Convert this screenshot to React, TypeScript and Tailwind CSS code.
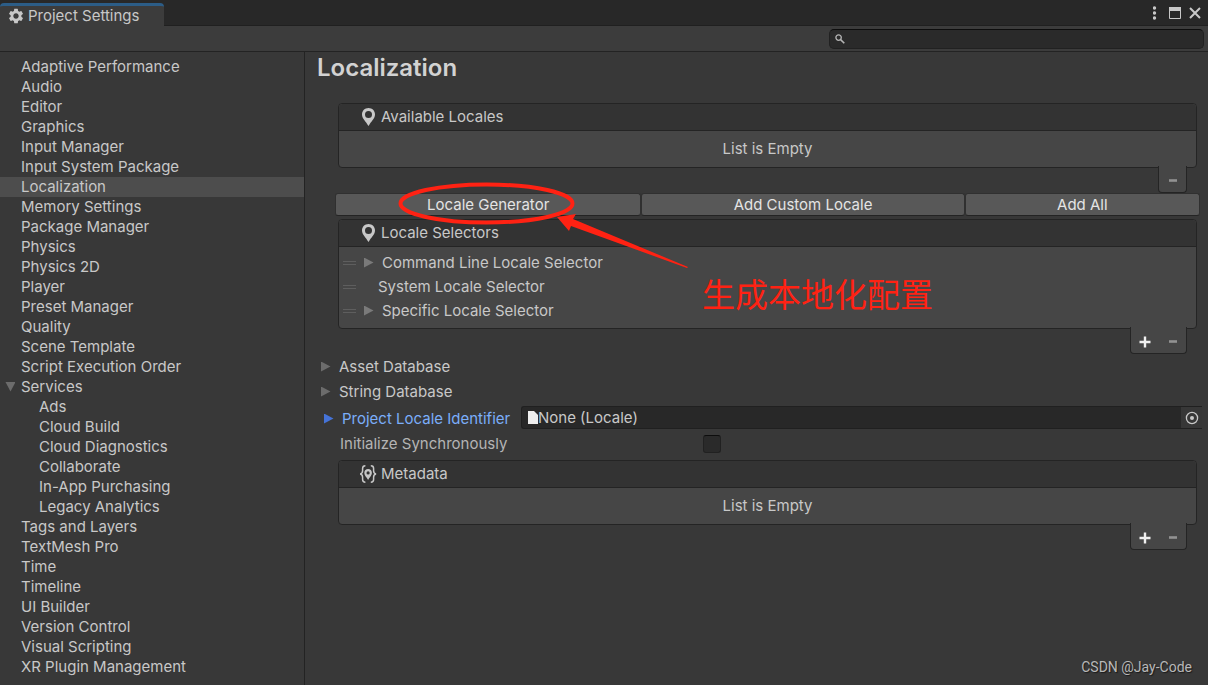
import type { ReactNode } from 'react';
import { MdSettings } from 'react-icons/md';
import clsx from 'clsx';

type NavItem = { label: string; child?: boolean; open?: boolean };

const NAV: NavItem[] = [
  { label: 'Adaptive Performance' },
  { label: 'Audio' },
  { label: 'Editor' },
  { label: 'Graphics' },
  { label: 'Input Manager' },
  { label: 'Input System Package' },
  { label: 'Localization' },
  { label: 'Memory Settings' },
  { label: 'Package Manager' },
  { label: 'Physics' },
  { label: 'Physics 2D' },
  { label: 'Player' },
  { label: 'Preset Manager' },
  { label: 'Quality' },
  { label: 'Scene Template' },
  { label: 'Script Execution Order' },
  { label: 'Services', open: true },
  { label: 'Ads', child: true },
  { label: 'Cloud Build', child: true },
  { label: 'Cloud Diagnostics', child: true },
  { label: 'Collaborate', child: true },
  { label: 'In-App Purchasing', child: true },
  { label: 'Legacy Analytics', child: true },
  { label: 'Tags and Layers' },
  { label: 'TextMesh Pro' },
  { label: 'Time' },
  { label: 'Timeline' },
  { label: 'UI Builder' },
  { label: 'Version Control' },
  { label: 'Visual Scripting' },
  { label: 'XR Plugin Management' },
];

const SELECTORS = [
  { label: 'Command Line Locale Selector', foldout: true },
  { label: 'System Locale Selector', foldout: false },
  { label: 'Specific Locale Selector', foldout: true },
];

function Triangle({ className }: { className?: string }) {
  return (
    <svg width="10" height="10" viewBox="0 0 10 10" className={clsx('shrink-0', className)} aria-hidden="true">
      <path d="M0 -0.5L9.5 4.5L0 9.5Z" fill="currentColor" />
    </svg>
  );
}

function PinIcon() {
  return (
    <svg width="18" height="18" viewBox="0 0 18 18" className="shrink-0" aria-hidden="true">
      <path
        fillRule="evenodd"
        fill="#c8c8c8"
        d="M9.5 0C5.8 0 3 2.8 3 6.4C3 10.6 6.9 13.2 9.5 18C12.1 13.2 16 10.6 16 6.4C16 2.8 13.2 0 9.5 0ZM9.5 3A3.5 3.5 0 1 1 9.5 10A3.5 3.5 0 1 1 9.5 3Z"
      />
    </svg>
  );
}

function MetadataIcon() {
  return (
    <svg width="18" height="18" viewBox="0 0 18 18" className="shrink-0" aria-hidden="true">
      <g fill="none" stroke="#c8c8c8" strokeWidth="1.5">
        <path d="M6.4 0.8C4.4 0.8 3.6 1.8 3.6 3.4V5.8C3.6 7.6 2.8 8.6 1.2 9C2.8 9.4 3.6 10.4 3.6 12.2V14.6C3.6 16.2 4.4 17.2 6.4 17.2" />
        <path d="M11.8 0.8C13.8 0.8 14.6 1.8 14.6 3.4V5.8C14.6 7.6 15.4 8.6 17 9C15.4 9.4 14.6 10.4 14.6 12.2V14.6C14.6 16.2 13.8 17.2 11.8 17.2" />
      </g>
      <path
        fillRule="evenodd"
        fill="#c8c8c8"
        d="M9.1 4C6.9 4 5.3 5.6 5.3 7.9C5.3 10.6 7.7 12 9.1 15C10.5 12 12.9 10.6 12.9 7.9C12.9 5.6 11.3 4 9.1 4ZM9.1 6.3A1.6 1.6 0 1 1 9.1 9.5A1.6 1.6 0 1 1 9.1 6.3Z"
      />
    </svg>
  );
}

function ListPanel({ title, icon, children }: { title: string; icon: ReactNode; children: ReactNode }) {
  return (
    <section className="rounded border border-[#242424] bg-[#464646]">
      <header className="flex h-[27px] items-center gap-1 rounded-t border-b border-[#242424] bg-[#333333] pl-5">
        {icon}
        <h2>{title}</h2>
      </header>
      {children}
    </section>
  );
}

function EmptyList() {
  return <p className="flex h-9 items-center justify-center">List is Empty</p>;
}

// Add / remove tab that hangs from the bottom edge of a list
function ListFooter({ canAdd = true }: { canAdd?: boolean }) {
  return (
    <div className="-mt-0.5 mr-2.5 flex justify-end">
      <div className="relative flex h-[27px] rounded-b border border-t-0 border-[#242424] bg-[#464646]">
        {canAdd && (
          <button type="button" aria-label="Add" className="flex w-7 items-center justify-center pt-1">
            <svg width="12" height="12" viewBox="0 0 12 12" aria-hidden="true">
              <path d="M6 0.5V11.5M0.5 6H11.5" stroke="#f0f0f0" strokeWidth="2.4" />
            </svg>
          </button>
        )}
        <button type="button" aria-label="Remove" className="flex w-[27px] items-center justify-center pt-1">
          <svg width="8" height="12" viewBox="0 0 8 12" aria-hidden="true">
            <path d="M0 5.5H8" stroke="#929292" strokeWidth="2.6" />
          </svg>
        </button>
      </div>
    </div>
  );
}

function TitleBar() {
  return (
    <div className="flex h-[26px] items-end justify-between bg-[#282828] shadow-[inset_0_-1px_0_#202020]">
      <div className="flex h-[23px] w-[164px] items-center gap-[3px] rounded-t-sm border-t-[3px] border-[#2c5d87] bg-[#3c3c3c] pl-[7px]">
        <MdSettings size={18} color="#c8c8c8" />
        <h1>Project Settings</h1>
      </div>
      <div className="flex h-full items-center gap-2 pr-[7px] text-[#c8c8c8]">
        <button type="button" aria-label="Window menu" className="px-1">
          <svg width="4" height="14" viewBox="0 0 4 14" fill="currentColor" aria-hidden="true">
            <circle cx="1.5" cy="2" r="1.7" />
            <circle cx="1.5" cy="7" r="1.7" />
            <circle cx="1.5" cy="12" r="1.7" />
          </svg>
        </button>
        <button type="button" aria-label="Maximize">
          <svg width="12" height="12" viewBox="0 0 12 12" aria-hidden="true">
            <path d="M0.5 0.5H11.5V11.5H0.5Z" fill="none" stroke="currentColor" />
            <path d="M0 0H12V4H0Z" fill="currentColor" />
          </svg>
        </button>
        <button type="button" aria-label="Close">
          <svg width="12" height="12" viewBox="0 0 12 12" aria-hidden="true">
            <path d="M1 1L11 11M11 1L1 11" stroke="currentColor" strokeWidth="2" />
          </svg>
        </button>
      </div>
    </div>
  );
}

function Toolbar() {
  return (
    <div className="flex h-[26px] items-center justify-end border-b border-[#232323] bg-[#3c3c3c] pr-1">
      <label className="flex h-5 w-[375px] items-center gap-2 rounded-[5px] border border-[#212121] border-t-[#0d0d0d] bg-[#2a2a2a] px-[5px]">
        <svg width="10" height="10" viewBox="0 0 10 10" className="shrink-0" aria-hidden="true">
          <circle cx="3.6" cy="3.6" r="2.7" fill="none" stroke="#b4b4b4" strokeWidth="1.3" />
          <path d="M5.6 5.6L9.3 9.3" stroke="#b4b4b4" strokeWidth="1.6" />
        </svg>
        <input type="text" aria-label="Search settings" className="min-w-0 flex-1 bg-transparent outline-none" />
      </label>
    </div>
  );
}

function Sidebar() {
  return (
    <nav className="w-[305px] shrink-0 border-r border-[#232323] pt-[5px]">
      {NAV.map(item => (
        <a
          key={item.label}
          href="#"
          className={clsx(
            'flex h-5 items-center',
            item.label === 'Localization' && 'bg-[#4d4d4d]',
            item.child ? 'pl-[39px]' : item.open ? 'gap-1.5 pl-[5px]' : 'pl-[21px]'
          )}
        >
          {item.open && <Triangle className="rotate-90 text-[#6c6c6c]" />}
          {item.label}
        </a>
      ))}
    </nav>
  );
}

const BUTTON = 'rounded-[3px] border border-[#303030] border-b-[#242424] bg-[#585858] text-[#e4e4e4]';

// Hand-drawn callout over the Locale Generator button
function Callout() {
  return (
    <div className="pointer-events-none absolute top-[128px] left-[90px]">
      <svg width="300" height="96" viewBox="0 0 300 96" aria-hidden="true">
        <ellipse cx="91.5" cy="23.5" rx="86" ry="19" fill="none" stroke="#ff2213" strokeWidth="4" />
        <path d="M162 37L181 34L178 39L293 87L292 88L176 46L174 51Z" fill="#ff2213" />
      </svg>
      <p className="absolute top-[92px] left-[307px] font-['Noto_Sans_CJK_SC',sans-serif] text-[33px] leading-[42px] font-normal whitespace-nowrap text-[#ff2213]">
        生成本地化配置
      </p>
    </div>
  );
}

function LocalizationPage() {
  return (
    <main className="relative min-w-0 flex-1">
      <h2 className="mb-[19px] pl-3 text-2xl leading-8 font-semibold text-[#d2d2d2]">Localization</h2>

      <div className="pr-[11px] pl-[33px]">
        <ListPanel title="Available Locales" icon={<PinIcon />}>
          <EmptyList />
        </ListPanel>
        <ListFooter canAdd={false} />
      </div>

      <div className="mb-[3px] grid h-[23px] grid-cols-[306fr_323fr_235fr] pr-2 pl-[30px]">
        <button type="button" className={BUTTON}>Locale Generator</button>
        <button type="button" className={BUTTON}>Add Custom Locale</button>
        <button type="button" className={BUTTON}>Add All</button>
      </div>

      <div className="pr-[11px] pl-[33px]">
        <ListPanel title="Locale Selectors" icon={<PinIcon />}>
          <ul className="pt-1 pb-[5px]">
            {SELECTORS.map(s => (
              <li key={s.label} className="flex h-6 items-center pl-1">
                <span className="h-1 w-[13px] border-y border-[#5e5e5e]" />
                {s.foldout ? (
                  <button type="button" className="ml-2 flex items-center gap-2">
                    <Triangle className="text-[#7a7a7a]" />
                    {s.label}
                  </button>
                ) : (
                  <span className="ml-[22px]">{s.label}</span>
                )}
              </li>
            ))}
          </ul>
        </ListPanel>
        <ListFooter />
      </div>

      <button type="button" className="flex h-[25px] items-center gap-2 pl-4">
        <Triangle className="text-[#6c6c6c]" />
        Asset Database
      </button>
      <button type="button" className="flex h-[25px] items-center gap-2 pl-4">
        <Triangle className="text-[#6c6c6c]" />
        String Database
      </button>

      <div className="mt-0.5 flex h-[23px] items-center pr-1.5 pl-[19px]">
        <button type="button" className="flex w-[197px] shrink-0 items-center gap-2 pt-0.5 text-[#7baefa]">
          <Triangle className="text-[#4573d8]" />
          Project Locale Identifier
        </button>
        <div className="flex h-full min-w-0 flex-1 items-center rounded-l-[3px] border border-r-0 border-[#202020] bg-[#282828] pl-1.5">
          <svg width="10" height="13" viewBox="0 0 10 13" className="shrink-0" aria-hidden="true">
            <path d="M0 0H6L10 4V13H0Z" fill="#eeeeee" />
          </svg>
          <input
            type="text"
            readOnly
            aria-label="Project Locale Identifier"
            value="None (Locale)"
            className="min-w-0 flex-1 bg-transparent outline-none"
          />
          <button type="button" aria-label="Select locale" className="flex h-full w-[21px] items-center justify-center bg-[#373737]">
            <svg width="14" height="14" viewBox="0 0 14 14" aria-hidden="true">
              <circle cx="7" cy="7" r="5.6" fill="none" stroke="#c8c8c8" strokeWidth="1.3" />
              <circle cx="7" cy="7" r="2" fill="#c8c8c8" />
            </svg>
          </button>
        </div>
      </div>

      <div className="mt-1 mb-1.5 flex h-[21px] items-center pl-[35px] text-[#b4b4b4]">
        <label htmlFor="init-sync" className="w-[363px]">Initialize Synchronously</label>
        <input
          id="init-sync"
          type="checkbox"
          className="size-[18px] appearance-none rounded-[3px] border border-[#212121] border-t-[#0d0d0d] bg-[#2a2a2a]"
        />
      </div>

      <div className="pr-[11px] pl-[33px]">
        <ListPanel title="Metadata" icon={<MetadataIcon />}>
          <EmptyList />
        </ListPanel>
        <ListFooter />
      </div>

      <Callout />
    </main>
  );
}

export default function App() {
  return (
    <div className="relative flex min-h-screen flex-col bg-[#383838] font-[Inter,sans-serif] text-[15px] leading-5 text-[#c8c8c8]">
      <TitleBar />
      <Toolbar />
      <div className="flex flex-1">
        <Sidebar />
        <LocalizationPage />
      </div>
      <p className="absolute right-4 bottom-2 font-[Roboto,sans-serif] text-sm text-[#b8b8b8] [text-shadow:1px_1px_1px_#1a1a1a]">
        CSDN @Jay-Code
      </p>
    </div>
  );
}
